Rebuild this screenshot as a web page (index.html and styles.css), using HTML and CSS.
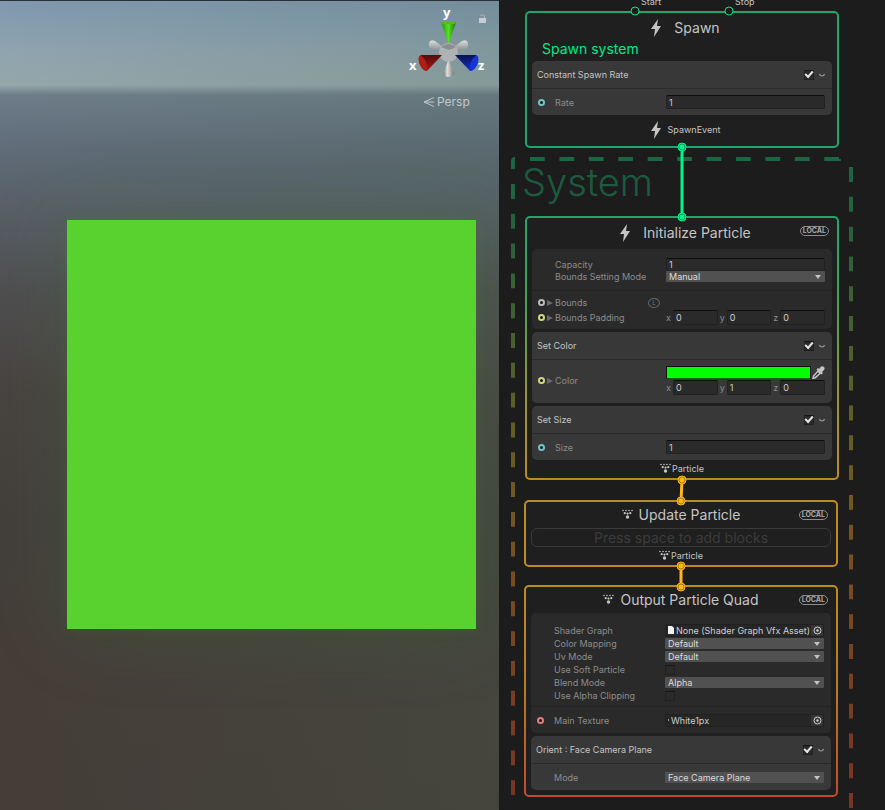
FILE: index.html
```html
<!DOCTYPE html>
<html lang="en">

<head>
  <meta charset="UTF-8">
  <meta name="viewport" content="width=device-width, initial-scale=1.0">
  <title>VFX Graph</title>
  <link rel="stylesheet" href="styles.css">
</head>

<body>
  <!-- shared icons -->
  <svg class="defs" width="0" height="0" aria-hidden="true">
    <symbol id="bolt" viewBox="0 0 12 18">
      <path d="M8 0 L1 10 H5 L4 18 L11 7 H7 Z" />
    </symbol>
    <symbol id="particles" viewBox="0 0 11 10">
      <circle cx="1" cy="1.500" r=".8" /><circle cx="4" cy="1.500" r=".8" /><circle cx="7" cy="1.500" r=".8" /><circle cx="10" cy="1.500" r=".8" />
      <circle cx="2.700" cy="4.200" r="1.100" /><circle cx="5.500" cy="4.600" r="1.100" /><circle cx="8.300" cy="4.200" r="1.100" />
      <circle cx="5.500" cy="8" r="1.700" />
    </symbol>
    <symbol id="chevron" viewBox="0 0 8 6">
      <path d="M1.500 2 Q2 4 4 4 Q6 4 6.500 2" fill="none" stroke="currentColor" stroke-width="1.2" />
    </symbol>
    <symbol id="target" viewBox="0 0 9 9">
      <circle cx="4.5" cy="4.5" r="3.5" fill="none" stroke="currentColor" />
      <circle cx="4.5" cy="4.5" r="1.2" />
    </symbol>
  </svg>

  <main class="editor">
    <section class="scene" aria-label="Scene">
      <div class="quad"></div>
      <div class="gizmo">
        <svg width="99" height="88" viewBox="400 0 99 88">
          <defs>
            <linearGradient id="gy"><stop offset="0" stop-color="#2f8a12" /><stop offset=".5" stop-color="#55e024" /><stop offset="1" stop-color="#246b0e" /></linearGradient>
            <linearGradient id="gx" x2="0" y2="1"><stop offset="0" stop-color="#560c0a" /><stop offset="1" stop-color="#a81a14" /></linearGradient>
            <linearGradient id="gz" x2="0" y2="1"><stop offset="0" stop-color="#0a1050" /><stop offset="1" stop-color="#1630d0" /></linearGradient>
            <linearGradient id="gg"><stop offset="0" stop-color="#777" /><stop offset=".4" stop-color="#dedede" /><stop offset="1" stop-color="#777" /></linearGradient>
            <linearGradient id="ga" x2="0" y2="1"><stop offset="0" stop-color="#dcdddd" /><stop offset="1" stop-color="#868a8c" /></linearGradient>
          </defs>
          <path fill="url(#ga)" d="M443 47 L435 41 Q430 39 429 43 Q428 48 432 49 L441 51 Z" />
          <path fill="url(#ga)" d="M454 47 L462 41 Q467 39 468 43 Q469 48 465 49 L456 51 Z" />
          <circle cx="448.5" cy="52.5" r="9.5" fill="#b0b2b4" />
          <path fill="#8b8d8f" d="M441 47 Q448 41 456 47 L449 50 Z" />
          <path fill="url(#gx)" d="M442 55 L421 55 Q417 58 420 65 Q423 71 427 71 Z" />
          <ellipse cx="423" cy="63" rx="3.2" ry="8" transform="rotate(-24 423 63)" fill="#b01c16" />
          <path fill="url(#gz)" d="M455 55 L476 55 Q480 58 477 65 Q474 71 470 71 Z" />
          <ellipse cx="474" cy="63" rx="3.2" ry="8" transform="rotate(24 474 63)" fill="#1634dc" />
          <path fill="url(#gg)" d="M448 61 L443 74 Q444 77 448.500 77 Q453 77 454 74 L449 61 Z" />
          <path fill="url(#gy)" d="M441 22 H456 L449 43 H448 Z" />
          <path fill="#48c31c" d="M441 22 H456 L455 24 H442 Z" />
          <g class="axis">
            <text x="443" y="17">y</text>
            <text x="409" y="70">x</text>
            <text x="478" y="70">z</text>
          </g>
          <rect x="479" y="18" width="7" height="5" fill="#c9cdd0" />
          <path d="M480 16 Q482 13.500 484.500 15.500 V18" fill="none" stroke="#aab2b8" />
        </svg>
        <button class="persp" type="button">
          <svg width="11" height="10" viewBox="0 0 11 10"><path d="M11 0.500 L1 5 L11 9.500 M1 5 H11" fill="none" stroke="currentColor" /></svg>
          Persp
        </button>
      </div>
    </section>

    <section class="graph" aria-label="Graph">
      <!-- dashed outline of the system group -->
      <svg class="layer" width="386" height="810" viewBox="499 0 386 810" aria-hidden="true">
        <defs>
          <linearGradient id="sys" gradientUnits="userSpaceOnUse" x1="0" y1="157" x2="0" y2="810">
            <stop offset="0" stop-color="#1d6644" />
            <stop offset=".1" stop-color="#24623d" />
            <stop offset=".4" stop-color="#5f5f26" />
            <stop offset=".55" stop-color="#745620" />
            <stop offset=".8" stop-color="#783f22" />
            <stop offset="1" stop-color="#783425" />
          </linearGradient>
        </defs>
        <g fill="none" stroke="url(#sys)" stroke-width="4">
          <path d="M513 169 V161 Q513 159 515 159" />
          <path d="M513 184 V810" pathLength="630" stroke-dasharray="15 15" />
          <path d="M851 167 V808" pathLength="645" stroke-dasharray="15 15" />
          <path d="M530 159 H839 V158" pathLength="316" stroke-dasharray="15 15" />
        </g>
      </svg>
      <h1 class="system-title">System</h1>

      <article class="node spawn">
        <span class="flow-label start">Start</span>
        <span class="flow-label stop">Stop</span>
        <h2 class="title event"><svg class="bolt"><use href="#bolt" /></svg>Spawn</h2>
        <p class="node-label">Spawn system</p>
        <div class="blocks">
          <div class="block">
            <div class="block-head">
              <label for="spawn-on">Constant Spawn Rate</label>
              <input class="check" id="spawn-on" type="checkbox" checked>
              <button class="fold" type="button" aria-label="Collapse"><svg><use href="#chevron" /></svg></button>
            </div>
            <div class="props single">
              <div class="row">
                <span class="port float"></span>
                <label for="rate">Rate</label>
                <input class="field" id="rate" value="1">
              </div>
            </div>
          </div>
        </div>
        <div class="foot event"><svg class="bolt"><use href="#bolt" /></svg>SpawnEvent</div>
      </article>

      <article class="node init">
        <span class="badge">LOCAL</span>
        <h2 class="title event"><svg class="bolt"><use href="#bolt" /></svg>Initialize Particle</h2>
        <div class="blocks">
          <div class="block dark">
            <div class="props settings">
              <div class="row">
                <span></span>
                <label for="capacity">Capacity</label>
                <input class="field" id="capacity" value="1">
              </div>
              <div class="row">
                <span></span>
                <label for="bounds-mode">Bounds Setting Mode</label>
                <span class="select"><select id="bounds-mode"><option>Manual</option></select></span>
              </div>
            </div>
            <div class="props slots">
              <div class="row">
                <span class="port any arrow"></span>
                <span class="name">Bounds <span class="space">L</span></span>
              </div>
              <div class="row">
                <span class="port vec arrow"></span>
                <span class="name">Bounds Padding</span>
                <div class="vector">
                  <label>x<input class="field" value="0"></label>
                  <label>y<input class="field" value="0"></label>
                  <label>z<input class="field" value="0"></label>
                </div>
              </div>
            </div>
          </div>

          <div class="block">
            <div class="block-head">
              <label for="color-on">Set Color</label>
              <input class="check" id="color-on" type="checkbox" checked>
              <button class="fold" type="button" aria-label="Collapse"><svg><use href="#chevron" /></svg></button>
            </div>
            <div class="props color">
              <div class="row">
                <span class="port vec arrow"></span>
                <span class="name">Color</span>
                <div class="color-field">
                  <div class="picker">
                    <button class="swatch" type="button" aria-label="Color"></button>
                    <button class="dropper" type="button" aria-label="Pick color">
                      <svg width="13" height="13" viewBox="0 0 13 13">
                        <path d="M8 1.500 Q10.500 -0.500 12 1 Q13.500 2.500 11.500 4.500 L10 6 L11 7 L9.500 8.500 L4.500 3.500 L6 2 L7 3 Z" />
                        <path d="M6 5 L8.200 7.200 L3.500 11.500 L1 12.500 L1.500 10 Z" fill="none" stroke="currentColor" stroke-width="1.500" />
                      </svg>
                    </button>
                  </div>
                  <div class="vector">
                    <label>x<input class="field" value="0"></label>
                    <label>y<input class="field" value="1"></label>
                    <label>z<input class="field" value="0"></label>
                  </div>
                </div>
              </div>
            </div>
          </div>

          <div class="block">
            <div class="block-head">
              <label for="size-on">Set Size</label>
              <input class="check" id="size-on" type="checkbox" checked>
              <button class="fold" type="button" aria-label="Collapse"><svg><use href="#chevron" /></svg></button>
            </div>
            <div class="props single">
              <div class="row">
                <span class="port float"></span>
                <label for="size">Size</label>
                <input class="field" id="size" value="1">
              </div>
            </div>
          </div>
        </div>
        <div class="foot"><svg class="dots"><use href="#particles" /></svg>Particle</div>
      </article>

      <article class="node update">
        <span class="badge">LOCAL</span>
        <h2 class="title"><svg class="dots"><use href="#particles" /></svg>Update Particle</h2>
        <div class="blocks">
          <button class="empty" type="button">Press space to add blocks</button>
        </div>
        <div class="foot"><svg class="dots"><use href="#particles" /></svg>Particle</div>
      </article>

      <article class="node output">
        <span class="badge">LOCAL</span>
        <h2 class="title"><svg class="dots"><use href="#particles" /></svg>Output Particle Quad</h2>
        <div class="blocks">
          <div class="block dark">
            <div class="props options">
              <div class="row">
                <span></span>
                <label for="shader">Shader Graph</label>
                <div class="object">
                  <svg class="file" width="6" height="8" viewBox="0 0 6 8"><path d="M0 0 H4 L6 2 V8 H0 Z" /></svg>
                  <input id="shader" value="None (Shader Graph Vfx Asset)" readonly>
                  <button type="button" aria-label="Select asset"><svg><use href="#target" /></svg></button>
                </div>
              </div>
              <div class="row">
                <span></span>
                <label for="mapping">Color Mapping</label>
                <span class="select"><select id="mapping"><option>Default</option></select></span>
              </div>
              <div class="row">
                <span></span>
                <label for="uv">Uv Mode</label>
                <span class="select"><select id="uv"><option>Default</option></select></span>
              </div>
              <div class="row">
                <span></span>
                <label for="soft">Use Soft Particle</label>
                <input class="check" id="soft" type="checkbox">
              </div>
              <div class="row">
                <span></span>
                <label for="blend">Blend Mode</label>
                <span class="select"><select id="blend"><option>Alpha</option></select></span>
              </div>
              <div class="row">
                <span></span>
                <label for="clip">Use Alpha Clipping</label>
                <input class="check" id="clip" type="checkbox">
              </div>
            </div>
            <div class="props single">
              <div class="row">
                <span class="port tex"></span>
                <label for="texture">Main Texture</label>
                <div class="object">
                  <svg class="pixel" width="1" height="2"><rect width="1" height="2" /></svg>
                  <input id="texture" value="White1px" readonly>
                  <button type="button" aria-label="Select texture"><svg><use href="#target" /></svg></button>
                </div>
              </div>
            </div>
          </div>

          <div class="block">
            <div class="block-head">
              <label for="orient-on">Orient : Face Camera Plane</label>
              <input class="check" id="orient-on" type="checkbox" checked>
              <button class="fold" type="button" aria-label="Collapse"><svg><use href="#chevron" /></svg></button>
            </div>
            <div class="props single">
              <div class="row">
                <span></span>
                <label for="mode">Mode</label>
                <span class="select"><select id="mode"><option>Face Camera Plane</option></select></span>
              </div>
            </div>
          </div>
        </div>
      </article>

      <!-- links between contexts -->
      <svg class="layer wires" width="386" height="810" viewBox="499 0 386 810" aria-hidden="true">
        <g class="pin">
          <circle cx="635" cy="11" r="4" />
          <circle cx="729" cy="11" r="4" />
        </g>
        <g class="link green">
          <path d="M682 147 V217" />
          <circle cx="682" cy="147" r="4" />
          <circle cx="682" cy="217" r="4" />
          <circle class="ring" cx="682" cy="147" r="3" />
          <circle class="ring" cx="682" cy="217" r="3" />
        </g>
        <g class="link gold">
          <path d="M682 480 L681 501 M681 566 V587" />
          <circle cx="682" cy="480" r="4" />
          <circle cx="681" cy="501" r="4" />
          <circle cx="681" cy="566" r="4" />
          <circle cx="681" cy="587" r="4" />
          <circle class="ring" cx="682" cy="480" r="3" />
          <circle class="ring" cx="681" cy="501" r="3" />
          <circle class="ring" cx="681" cy="566" r="3" />
          <circle class="ring" cx="681" cy="587" r="3" />
        </g>
      </svg>
    </section>
  </main>
</body>

</html>
```
FILE: styles.css
```css
*,
*::before,
*::after {
  box-sizing: border-box;
  margin: 0;
  padding: 0;
}

body {
  background: #1c1c1c;
  color: #c4c4c4;
  font-family: Inter, "Liberation Sans", sans-serif;
  font-size: 9px;
}

button,
input,
select {
  border: none;
  outline: none;
  background: none;
  color: inherit;
  font: inherit;
}

svg {
  display: block;
  fill: currentColor;
}

.defs {
  position: absolute;
}

.editor {
  display: grid;
  grid-template-columns: 499fr 386fr;
  min-height: 100vh;
}

/* scene view */
.scene {
  position: relative;
  overflow: hidden;
  border-top: 1px solid #2b3036;
  background:
    linear-gradient(90deg, rgba(70, 100, 80, 0), rgba(70, 100, 80, 0.2)),
    linear-gradient(#7f98af 0, #8ea4af 50px, #95a7ab 84px, #6e7d89 94px, #64717e 130px, #5c6772 170px, #575d64 220px, #4f4e50 290px, #484341 390px, #433f3b 520px, #453e38 680px, #443d38 100%);
}

.quad {
  position: absolute;
  top: 219px;
  left: 67px;
  right: 23px;
  aspect-ratio: 1;
  background: #59d12e;
  box-shadow: 0 0 12px rgba(80, 130, 70, 0.2), 0 0 70px rgba(70, 110, 60, 0.3);
}

.gizmo {
  position: absolute;
  top: -1px;
  right: 0;
  width: 99px;
}

.axis {
  fill: #fff;
  font: bold 13px "Open Sans", sans-serif;
}

.persp {
  display: flex;
  align-items: center;
  gap: 3px;
  margin: 6px 0 0 23px;
  color: #c3c8cc;
  font: 12px/16px Inter, sans-serif;
}

/* graph canvas */
.graph {
  position: relative;
  overflow: hidden;
  min-height: 810px;
  border-left: 1px solid #191919;
}

.layer {
  position: absolute;
  top: 0;
  left: -1px;
}

.wires {
  pointer-events: none;
}

.system-title {
  position: absolute;
  top: 159px;
  left: 22px;
  color: #1d5a40;
  font-size: 38px;
  font-weight: 300;
  line-height: 46px;
}

.node {
  position: absolute;
  width: 314px;
  padding-bottom: 2px;
  border: 2px solid transparent;
  border-radius: 5px;
  background: linear-gradient(#1f1f1f, #1f1f1f) padding-box, var(--edge) border-box;
}

.spawn {
  --edge: linear-gradient(#22a568, #22a568);
  top: 11px;
  left: 25px;
}

.init {
  --edge: linear-gradient(#22a568, #35a45c 25%, #93962f 65%, #bd8c20);
  top: 216px;
  left: 25px;
}

.update {
  --edge: linear-gradient(#bd8c20, #bd8c20);
  top: 500px;
  left: 24px;
}

.output {
  --edge: linear-gradient(#bd8c20, #b87a26 50%, #c04a2e);
  top: 585px;
  left: 24px;
  padding-bottom: 5px;
}

.title {
  display: flex;
  align-items: center;
  justify-content: center;
  gap: 6px;
  height: 24px;
  font-size: 14px;
  font-weight: 400;
}

.title.event {
  gap: 12px;
  height: 29px;
  padding-left: 6px;
}

.bolt {
  width: 12px;
  height: 18px;
}

.dots {
  width: 11px;
  height: 10px;
}

.badge {
  position: absolute;
  top: 8px;
  right: 8px;
  height: 10px;
  padding: 0 2px;
  border: 1px solid #8d8d8d;
  border-radius: 5px;
  color: #a8a8a8;
  font-size: 7px;
  font-weight: 700;
  line-height: 8px;
}

.node-label {
  padding: 0 0 4px 15px;
  color: #06e787;
  font-size: 14px;
  line-height: 13px;
}

.flow-label {
  position: absolute;
  top: -17px;
}

.start {
  left: 114px;
}

.stop {
  left: 208px;
}

.foot {
  display: flex;
  align-items: center;
  justify-content: center;
  gap: 1px;
  height: 16px;
}

.foot.event {
  gap: 6px;
  height: 29px;
  padding-left: 6px;
}

.blocks {
  display: flex;
  flex-direction: column;
  gap: 3px;
  padding: 2px 5px 0;
}

.block {
  border-radius: 5px;
  background: #383838;
}

.block.dark {
  background: #2a2a2a;
}

.block-head {
  display: flex;
  align-items: center;
  gap: 4px;
  height: 27px;
  padding: 0 6px 0 5px;
}

.block-head label {
  flex: 1;
}

.fold {
  width: 8px;
  height: 6px;
  color: #9a9a9a;
}

.fold svg {
  width: 8px;
  height: 6px;
}

.block-head + .props,
.props + .props {
  border-top: 1px solid #2a2a2a;
}

.dark .props + .props {
  border-color: #222;
}

.props {
  padding-right: 7px;
  color: #8c8c8c;
}

.single {
  padding-top: 6px;
  padding-bottom: 6px;
}

.settings {
  padding-top: 9px;
  padding-bottom: 8px;
}

.slots {
  padding-top: 4px;
  padding-bottom: 4px;
}

.color {
  padding-top: 6px;
  padding-bottom: 8px;
}

.options {
  padding-top: 10px;
  padding-bottom: 4px;
}

.row {
  display: grid;
  grid-template-columns: 23px 111px minmax(0, 1fr);
  align-items: center;
}

.single .row {
  height: 14px;
}

.settings .row {
  height: 12px;
}

.slots .row {
  height: 15px;
}

.options .row {
  height: 13px;
}

.options .row:first-child {
  height: 14px;
}

.name {
  display: flex;
  align-items: center;
  justify-content: space-between;
}

.space {
  width: 12px;
  margin-right: 6px;
  border: 1px solid #666;
  border-radius: 50%;
  color: #777;
  font-size: 6px;
  line-height: 8px;
  text-align: center;
}

/* input ports */
.port {
  display: flex;
  align-items: center;
  gap: 2px;
  padding-left: 6px;
}

.port::before {
  content: "";
  width: 7px;
  height: 7px;
  border: 2px solid currentColor;
  border-radius: 50%;
  background: #191919;
}

.port.arrow::after {
  content: "";
  border: 3px solid transparent;
  border-left: 6px solid #6a6a6a;
  border-right: none;
}

.float {
  color: #74c4c7;
}

.any {
  color: #bdbdbd;
}

.vec {
  color: #d5d77c;
}

.tex {
  color: #e67b7b;
}

/* fields */
.field {
  width: 100%;
  min-width: 0;
  height: 100%;
  padding: 0 2px;
  border: 1px solid #212121;
  border-top-color: #0d0d0d;
  border-radius: 2px;
  background: #2a2a2a;
  color: #cfcfcf;
}

.select {
  position: relative;
  display: block;
  height: 11px;
}

.select select {
  display: block;
  width: 100%;
  height: 11px;
  padding: 0 3px;
  border-radius: 1px;
  background: #515151;
  color: #dcdcdc;
  line-height: 11px;
  appearance: none;
}

.select::after {
  content: "";
  position: absolute;
  top: 4px;
  right: 4px;
  border: 3px solid transparent;
  border-top: 4px solid #c4c4c4;
  border-bottom: none;
}

.check {
  display: grid;
  place-items: center;
  width: 10px;
  height: 10px;
  border: 1px solid #212121;
  border-top-color: #161616;
  border-radius: 1px;
  background: #2a2a2a;
  appearance: none;
}

.check:checked::before {
  content: "";
  width: 8px;
  height: 5px;
  border: solid #e4e4e4;
  border-width: 0 0 2px 2px;
  transform: translateY(-1px) rotate(-48deg);
}

.vector {
  display: grid;
  grid-template-columns: repeat(3, 1fr);
  gap: 2px;
  height: 15px;
}

.vector label {
  display: grid;
  grid-template-columns: 7px 1fr;
  align-items: center;
}

.color-field {
  display: grid;
  gap: 1px;
}

.picker {
  display: flex;
  gap: 1px;
  height: 13px;
}

.swatch {
  flex: 1;
  border: 1px solid #101010;
  border-bottom-color: #0a5a0a;
  background: #00ff00;
}

.dropper {
  width: 13px;
  color: #c4c4c4;
}

.object {
  display: flex;
  align-items: center;
  gap: 2px;
  height: 13px;
  padding-left: 2px;
  border: 1px solid #202020;
  border-radius: 2px;
  background: #262626;
  color: #cfcfcf;
}

.object svg,
.object button {
  flex: none;
}

.object input {
  flex: 1;
  min-width: 0;
}

.object button {
  display: grid;
  place-items: center;
  width: 12px;
  height: 11px;
  margin-left: -2px;
  background: #353535;
}

.object button svg {
  width: 9px;
  height: 9px;
}

.file {
  color: #f0f0f0;
}

.pixel {
  color: #9a9a9a;
}

.empty {
  height: 19px;
  border: 1px solid #3a3a3a;
  border-radius: 6px;
  color: #3c3c3c;
  font-size: 14px;
  line-height: 17px;
}

/* links */
.pin circle {
  fill: #1c1c1c;
  stroke: #06e787;
  stroke-width: 1px;
}

.link path {
  fill: none;
  stroke: currentColor;
  stroke-width: 3px;
}

.link circle {
  stroke: currentColor;
  stroke-width: 1px;
}

.link .ring {
  fill: none;
  stroke: #1f1f1f;
  stroke-opacity: 0.4;
}

.green {
  color: #00f58a;
}

.gold {
  color: #ffb71c;
}
```
